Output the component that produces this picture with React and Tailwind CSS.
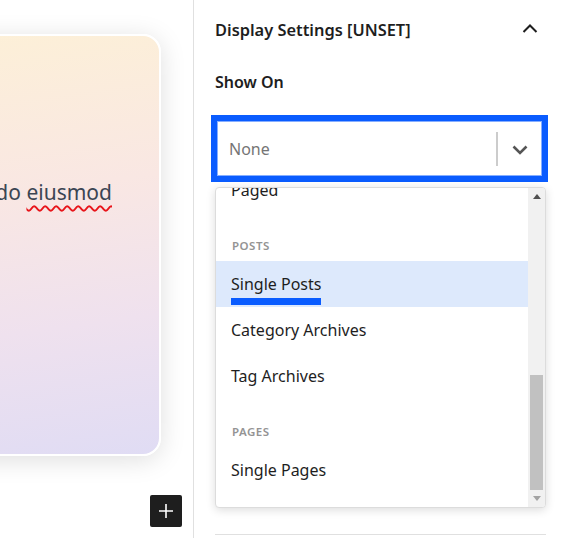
import React from "react"

const font = { fontFamily: '"Noto Sans", "Open Sans", sans-serif' }

const ChevronUp = () => (
  <svg width="16" height="9" viewBox="0 0 16 9" fill="none" stroke="#1e1e1e" strokeWidth="2">
    <polyline points="1.5,8 8,1.5 14.5,8" />
  </svg>
)

const ChevronDown = () => (
  <svg width="16" height="10" viewBox="0 0 16 10" fill="none" stroke="#555" strokeWidth="2.6">
    <polyline points="1.5,1.5 8,8 14.5,1.5" />
  </svg>
)

const Row = ({ label, active }) => (
  <div className={`h-[46px] flex items-center pl-[15px] text-[16px] text-[#1e1e1e] ${active ? "bg-[#dde9fc]" : ""}`}>
    <span className="relative leading-[24px]">
      {label}
      {active && <span className="absolute left-0 right-0 top-[calc(100%+2px)] h-[7px] bg-[#0a5cff]" />}
    </span>
  </div>
)

const Group = ({ label }) => (
  <div className="h-[48px] flex items-end pb-[7px] pl-[16px] text-[11.5px] tracking-[0.5px] leading-[16px] font-semibold uppercase text-[#949494]">
    {label}
  </div>
)

export default function App() {
  return (
    <div className="flex w-[566px] h-[538px] bg-white overflow-hidden" style={font}>
      {/* canvas */}
      <div className="w-[193px] shrink-0 flex flex-col pt-[34px]">
        <div className="-ml-[200px] w-[361px] h-[422px] shrink-0 rounded-[18px] border-2 border-white shadow-[0_4px_26px_rgba(0,0,0,0.13)] bg-[linear-gradient(172deg,#fdf1d6_0%,#f9e7e3_40%,#efe1ee_70%,#e0dcf4_100%)] flex justify-end pt-[140px] pr-[47px]">
          <p className="whitespace-nowrap text-[21px] leading-[32px] text-[#3c4553]">
            sed do{" "}
            <span className="underline decoration-wavy decoration-[#e8141a] decoration-[1.5px] underline-offset-[5px]">eiusmod</span>
          </p>
        </div>
        <button className="mt-[39px] self-end mr-[11px] w-[32px] h-[32px] rounded-[2px] bg-[#1e1e1e] flex items-center justify-center">
          <svg width="16" height="16" viewBox="0 0 16 16" stroke="#fff" strokeWidth="1.6">
            <path d="M8 1v14M1 8h14" />
          </svg>
        </button>
      </div>

      {/* settings panel */}
      <div className="flex-1 border-l border-[#e0e0e0] pl-[21px] pr-[20px] flex flex-col">
        <div className="h-[60px] flex items-center justify-between">
          <span className="text-[16.4px] font-semibold text-[#1e1e1e]">Display Settings [UNSET]</span>
          <span className="mr-[8px] mb-[3px]"><ChevronUp /></span>
        </div>
        <div className="mt-[10px] h-[24px] leading-[24px] text-[16px] font-semibold text-[#1e1e1e]">Show On</div>

        <div className="mt-[21px] -ml-[4px] -mr-[2px] h-[67px] border-[6px] border-[#0a5cff]">
          <div className="h-full border border-[#86aeff] bg-white flex items-center">
            <span className="flex-1 pl-[11px] text-[16px] text-[#757575]">None</span>
            <span className="w-[2px] h-[34px] bg-[#cccccc]" />
            <span className="w-[43px] flex justify-center pt-[2px]"><ChevronDown /></span>
          </div>
        </div>

        <div className="mt-[5px] h-[321px] border border-[#dcdcdc] rounded-[4px] bg-white shadow-[0_2px_10px_rgba(0,0,0,0.14)] flex overflow-hidden">
          <div className="flex-1 overflow-hidden">
            <div className="-mt-[21px]">
              <Row label="Paged" />
              <Group label="Posts" />
              <Row label="Single Posts" active />
              <Row label="Category Archives" />
              <Row label="Tag Archives" />
              <Group label="Pages" />
              <Row label="Single Pages" />
            </div>
          </div>
          <div className="w-[17px] bg-[#f1f1f1] flex flex-col">
            <div className="h-[17px] flex items-center justify-center">
              <svg width="8" height="5" viewBox="0 0 8 5"><polygon points="0,5 4,0 8,5" fill="#505050" /></svg>
            </div>
            <div className="flex-1 flex flex-col justify-end px-[2px]">
              <div className="h-[115px] bg-[#c1c1c1]" />
            </div>
            <div className="h-[17px] flex items-center justify-center">
              <svg width="8" height="5" viewBox="0 0 8 5"><polygon points="0,0 8,0 4,5" fill="#a3a3a3" /></svg>
            </div>
          </div>
        </div>

        <div className="mt-[26px] border-t border-[#e0e0e0]" />
      </div>
    </div>
  )
}
